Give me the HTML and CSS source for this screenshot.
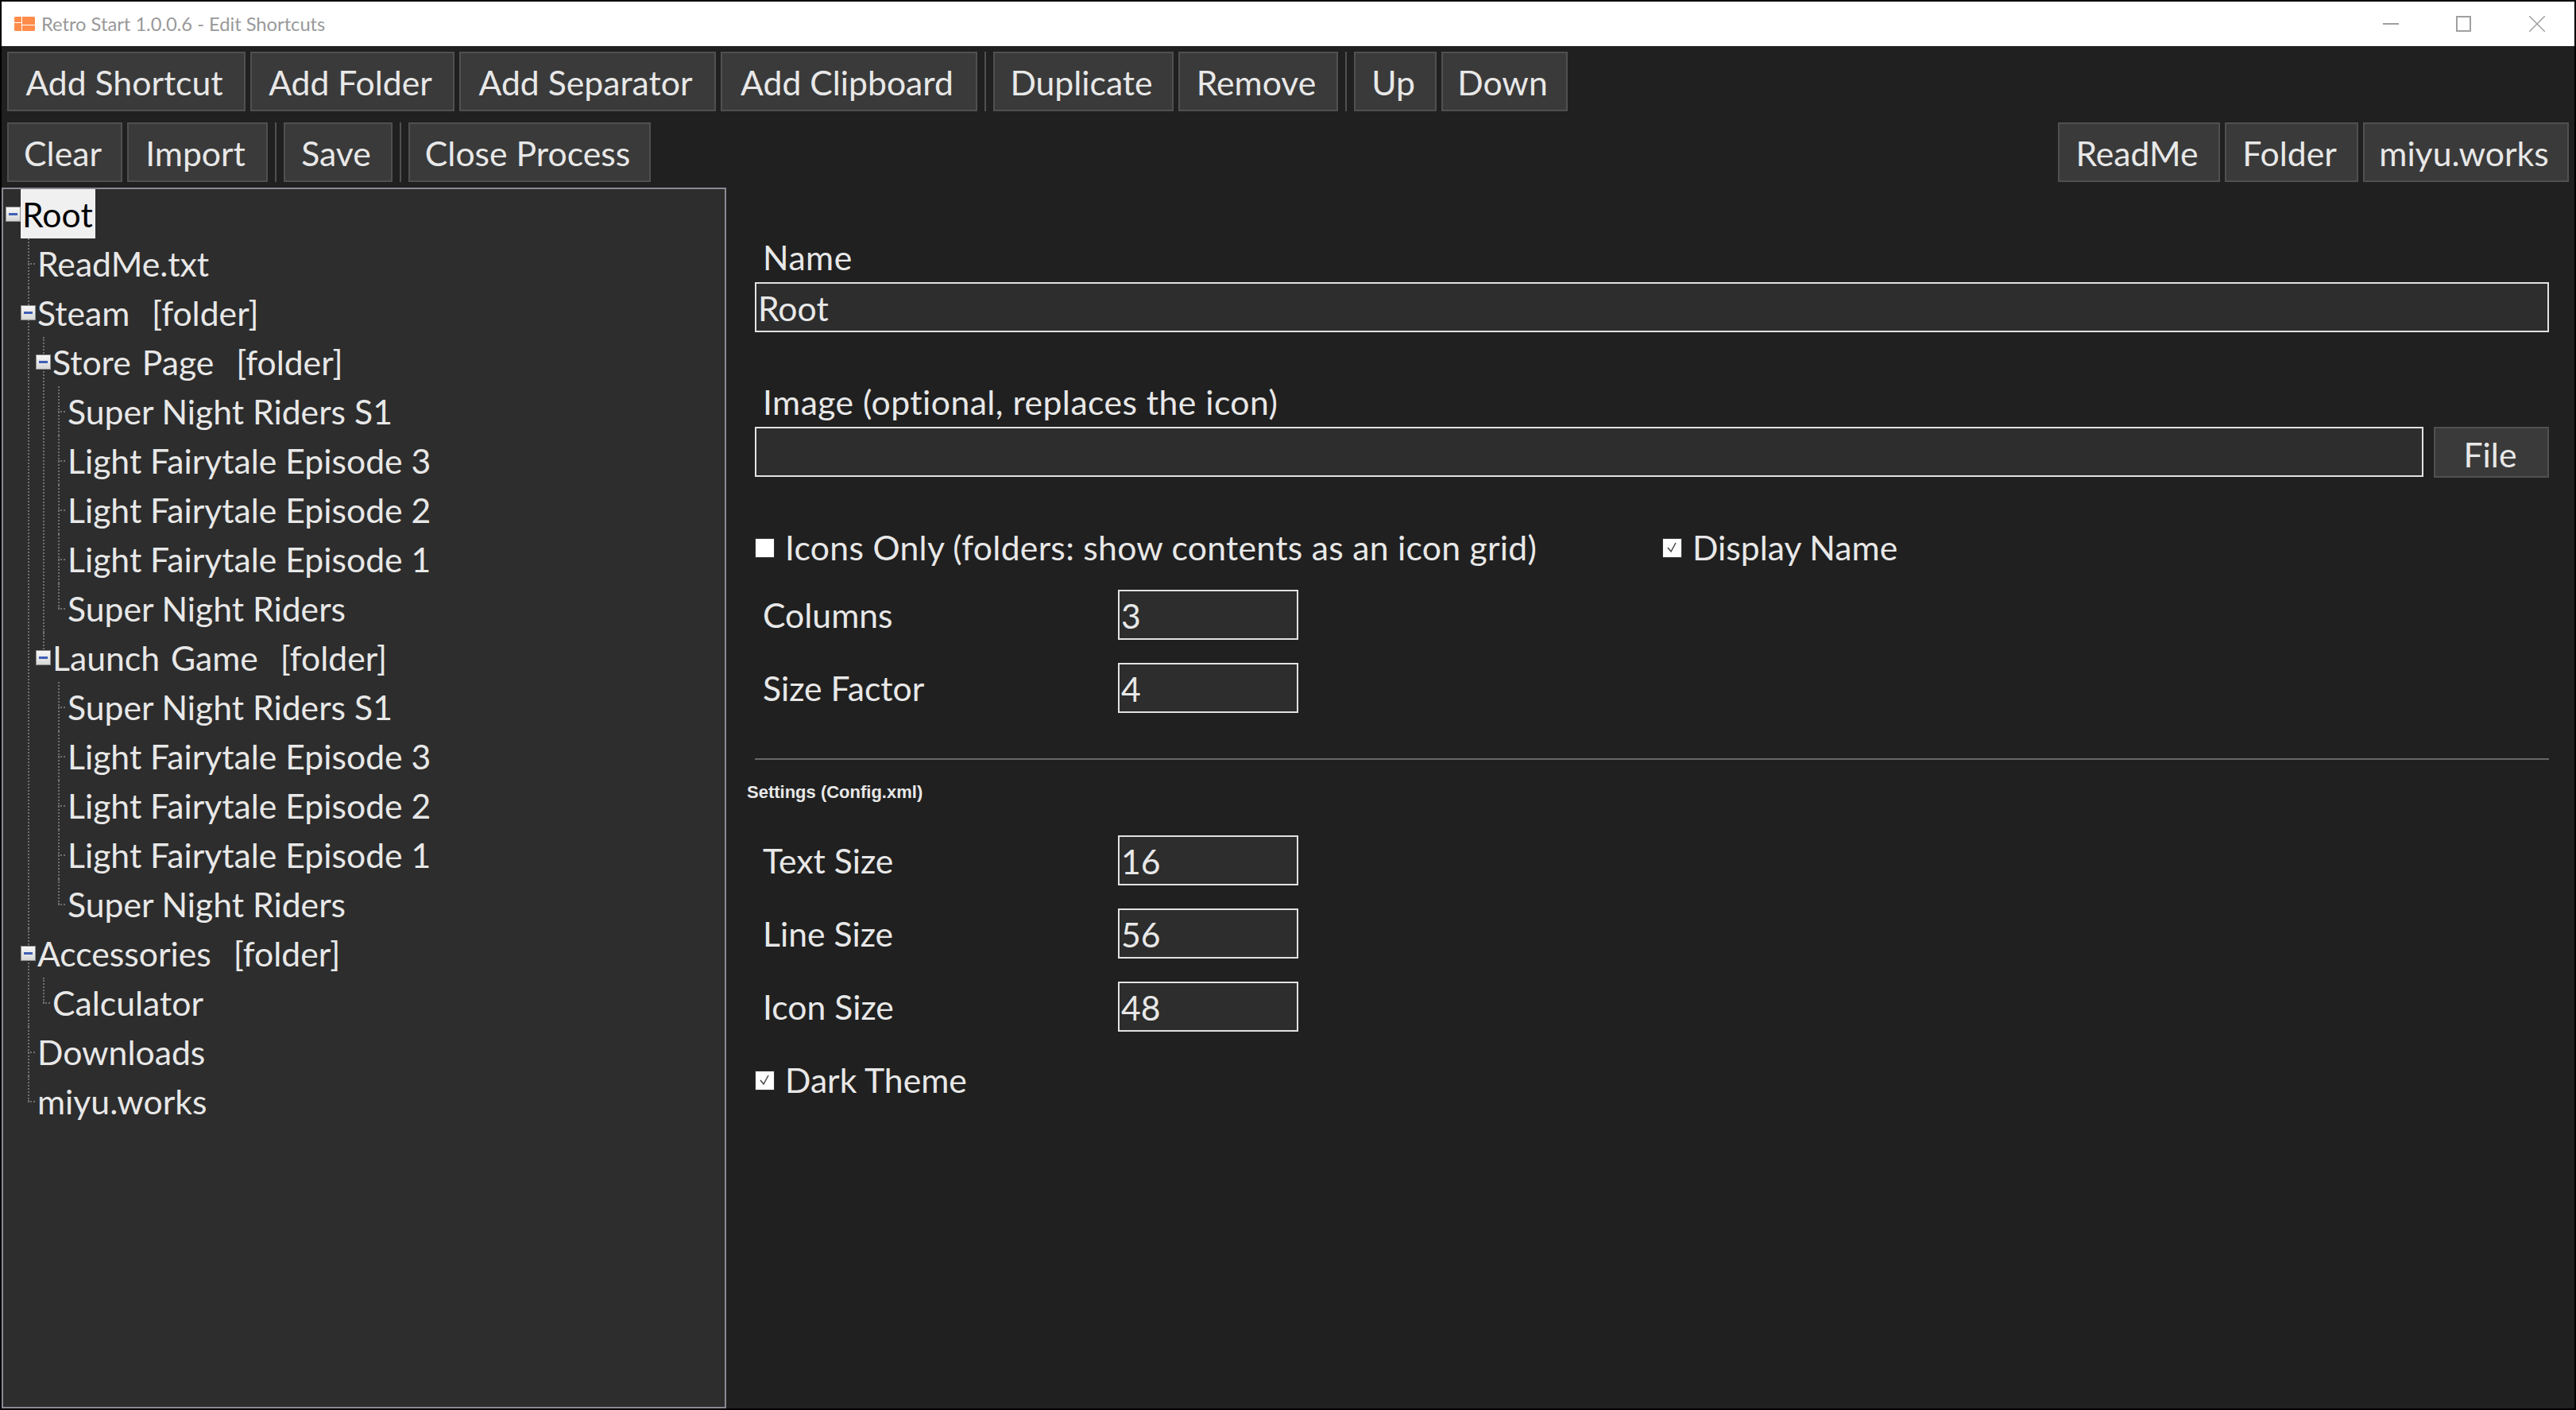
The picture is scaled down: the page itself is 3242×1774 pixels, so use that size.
FILE: index.html
```html
<!DOCTYPE html>
<html lang="en">
<head>
    <meta charset="UTF-8">
    <meta name="viewport" content="width=device-width, initial-scale=1.0">
    <title>Retro Start 1.0.0.6 - Edit Shortcuts</title>
    <link rel="stylesheet" href="styles.css">
</head>
<body>
    <div class="window">
        <div class="titlebar">
            <svg class="app-icon" width="26" height="18" viewBox="0 0 26 18">
                <path fill="#ff8c4b" d="M1.500 0H9v7H0V1.500A1.500 1.500 0 0 1 1.500 0zM10 0h14.500A1.500 1.500 0 0 1 26 1.500V10H10zM0 8h9v10H1.500A1.500 1.500 0 0 1 0 16.500zM10 11h16v5.500a1.500 1.500 0 0 1-1.500 1.500H10z"/>
            </svg>
            <span class="title-text">Retro Start 1.0.0.6 - Edit Shortcuts</span>
            <div class="window-controls">
                <svg width="20" height="20" viewBox="0 0 20 20"><path d="M0 10h20" stroke="#a0a0a0" stroke-width="2"/></svg>
                <svg width="20" height="20" viewBox="0 0 20 20"><path d="M1 1h17v18H1z" fill="none" stroke="#a0a0a0" stroke-width="2"/></svg>
                <svg width="20" height="20" viewBox="0 0 20 20"><path d="M0 0l20 20M20 0L0 20" stroke="#a0a0a0" stroke-width="1.500"/></svg>
            </div>
        </div>

        <div class="toolbar toolbar-first">
            <button class="btn">Add Shortcut</button>
            <button class="btn">Add Folder</button>
            <button class="btn">Add Separator</button>
            <button class="btn">Add Clipboard</button>
            <span class="tool-sep"></span>
            <button class="btn">Duplicate</button>
            <button class="btn">Remove</button>
            <span class="tool-sep"></span>
            <button class="btn">Up</button>
            <button class="btn">Down</button>
        </div>
        <div class="toolbar toolbar-second">
            <button class="btn">Clear</button>
            <button class="btn">Import</button>
            <span class="tool-sep"></span>
            <button class="btn">Save</button>
            <span class="tool-sep"></span>
            <button class="btn">Close Process</button>
            <span></span>
            <button class="btn">ReadMe</button>
            <button class="btn">Folder</button>
            <button class="btn">miyu.works</button>
        </div>

        <div class="content">
            <div class="tree-panel">
                <ul class="tree">
                    <li class="root">
                        <span class="expander"></span><span class="node selected">Root</span>
                        <ul>
                            <li><span class="node">ReadMe.txt</span></li>
                            <li>
                                <span class="expander"></span><span class="node folder">Steam&nbsp; [folder]</span>
                                <ul>
                                    <li>
                                        <span class="expander"></span><span class="node folder">Store Page&nbsp; [folder]</span>
                                        <ul>
                                            <li><span class="node">Super Night Riders S1</span></li>
                                            <li><span class="node">Light Fairytale Episode 3</span></li>
                                            <li><span class="node">Light Fairytale Episode 2</span></li>
                                            <li><span class="node">Light Fairytale Episode 1</span></li>
                                            <li><span class="node">Super Night Riders</span></li>
                                        </ul>
                                    </li>
                                    <li>
                                        <span class="expander"></span><span class="node folder">Launch Game&nbsp; [folder]</span>
                                        <ul>
                                            <li><span class="node">Super Night Riders S1</span></li>
                                            <li><span class="node">Light Fairytale Episode 3</span></li>
                                            <li><span class="node">Light Fairytale Episode 2</span></li>
                                            <li><span class="node">Light Fairytale Episode 1</span></li>
                                            <li><span class="node">Super Night Riders</span></li>
                                        </ul>
                                    </li>
                                </ul>
                            </li>
                            <li>
                                <span class="expander"></span><span class="node folder">Accessories&nbsp; [folder]</span>
                                <ul>
                                    <li><span class="node">Calculator</span></li>
                                </ul>
                            </li>
                            <li><span class="node">Downloads</span></li>
                            <li><span class="node">miyu.works</span></li>
                        </ul>
                    </li>
                </ul>
            </div>

            <div class="form">
                <label class="field-label">Name</label>
                <input class="text-input" type="text" value="Root">

                <label class="field-label field-label-gap">Image (optional, replaces the icon)</label>
                <div class="file-row">
                    <input class="text-input" type="text">
                    <button class="btn btn-file">File</button>
                </div>

                <div class="check-row">
                    <div class="check-item check-item-wide"><span class="check"></span>Icons Only (folders: show contents as an icon grid)</div>
                    <div class="check-item"><span class="check checked"><svg width="22" height="22" viewBox="0 0 22 22"><path d="M6 11l4 5 6-11" fill="none" stroke="#444" stroke-width="1.500"/></svg></span>Display Name</div>
                </div>

                <div class="num-row num-row-first"><label>Columns</label><input class="text-input num-input" type="text" value="3"></div>
                <div class="num-row"><label>Size Factor</label><input class="text-input num-input" type="text" value="4"></div>

                <hr class="divider">
                <div class="settings-title">Settings (Config.xml)</div>

                <div class="num-row num-row-settings"><label>Text Size</label><input class="text-input num-input" type="text" value="16"></div>
                <div class="num-row"><label>Line Size</label><input class="text-input num-input" type="text" value="56"></div>
                <div class="num-row"><label>Icon Size</label><input class="text-input num-input" type="text" value="48"></div>

                <div class="check-row check-row-last">
                    <div class="check-item"><span class="check checked"><svg width="22" height="22" viewBox="0 0 22 22"><path d="M6 11l4 5 6-11" fill="none" stroke="#444" stroke-width="1.500"/></svg></span>Dark Theme</div>
                </div>
            </div>
        </div>
    </div>
</body>
</html>
```

FILE: styles.css
```css
* {
    box-sizing: border-box;
}

html, body {
    height: 100%;
}

body {
    margin: 0;
    padding: 2px;
    background-color: #000;
    color: #e8e8e8;
    font-family: "Lato", "Open Sans", sans-serif;
    font-size: 42.7px;
}

.window {
    display: flex;
    flex-direction: column;
    height: 100%;
    background-color: #202020;
}

/* title bar */
.titlebar {
    display: flex;
    align-items: center;
    flex: none;
    height: 56px;
    padding-left: 16px;
    background-color: #fff;
}

.app-icon {
    margin-right: 8px;
}

.title-text {
    color: #999;
    font-size: 23.7px;
}

.window-controls {
    display: flex;
    gap: 72px;
    margin-left: auto;
    padding-right: 37px;
}

/* toolbars */
.toolbar {
    display: grid;
    flex: none;
    gap: 6px;
    padding: 7px 7px 0;
}

.toolbar-first {
    grid-template-columns: 300px 257px 323px 323px 8px 227px 201px 8px 104px 159px;
}

.toolbar-second {
    grid-template-columns: 145px 177px 8px 137px 8px 305px 1fr 204px 168px 259px;
    padding-top: 14px;
}

.btn {
    height: 75px;
    padding: 3px 5px 0 0;
    border: 2px solid #505050;
    background-color: #3a3a3a;
    color: #e8e8e8;
    font: inherit;
    line-height: 1;
    white-space: nowrap;
}

.tool-sep {
    justify-self: center;
    width: 2px;
    background-color: #505050;
}

/* shortcut tree */
.content {
    display: flex;
    flex: 1;
    min-height: 0;
    padding-top: 7px;
}

.tree-panel {
    flex: none;
    width: 912px;
    padding: 0 0 0 12px;
    border: 2px solid #8a8a94;
    background-color: #2d2d2d;
    overflow: hidden;
}

.tree,
.tree ul {
    margin: 0;
    padding: 0;
    list-style: none;
}

.tree ul {
    padding-left: 19px;
}

.tree li {
    position: relative;
}

.node {
    display: inline-block;
    height: 62px;
    margin-left: 10px;
    padding: 0 3px 0 2px;
    line-height: 64px;
    white-space: nowrap;
}

.folder {
    word-spacing: 3px;
}

.selected {
    background-color: #f0f0f0;
    color: #000;
}

.expander {
    position: absolute;
    left: -9px;
    top: 22px;
    z-index: 1;
    width: 19px;
    height: 19px;
    border: 1px solid #8e8f8f;
    background: linear-gradient(#f8f8f8, #d6d6d6);
}

.expander::after {
    content: "";
    position: absolute;
    left: 3px;
    top: 7px;
    width: 11px;
    height: 3px;
    background-color: #3f5fb5;
}

/* dotted tree lines */
.tree ul > li::before {
    content: "";
    position: absolute;
    left: 0;
    top: 0;
    bottom: 0;
    border-left: 2px dotted #707070;
}

.tree ul > li:last-child::before {
    bottom: auto;
    height: 32px;
}

.tree ul > li::after {
    content: "";
    position: absolute;
    left: 0;
    top: 31px;
    width: 9px;
    border-top: 2px dotted #707070;
}

/* right side form */
.form {
    flex: 1;
    min-width: 0;
    padding: 57px 32px 0 36px;
}

.field-label {
    display: block;
    height: 62px;
    padding-left: 10px;
    line-height: 62px;
    letter-spacing: 0.45px;
}

.field-label-gap {
    margin-top: 57px;
}

.text-input {
    display: block;
    width: 100%;
    height: 63px;
    padding: 2px 0 0 2px;
    border: 2px solid #e2e2e2;
    border-radius: 0;
    outline: none;
    background-color: #2d2d2d;
    color: #e8e8e8;
    font: inherit;
}

.file-row {
    display: flex;
    gap: 13px;
}

.file-row .text-input {
    flex: 1;
}

.btn-file {
    flex: none;
    width: 145px;
    height: 64px;
    padding: 6px 3px 0 0;
}

.check-row {
    display: flex;
    align-items: center;
    height: 62px;
    margin-top: 57px;
}

.check-item {
    display: flex;
    align-items: center;
    gap: 13px;
    line-height: 66px;
    white-space: nowrap;
}

.check-item-wide {
    width: 1142px;
    letter-spacing: 0.28px;
}

.check {
    flex: none;
    width: 25px;
    height: 25px;
    border: 1px solid #333;
    background-color: #fff;
}

.check svg {
    display: block;
}

.num-row {
    display: flex;
    align-items: center;
    margin-top: 29px;
}

.num-row label {
    width: 457px;
    padding-left: 10px;
}

.num-row .num-input {
    width: 227px;
}

.num-row-first {
    margin-top: 22px;
}

.num-row-settings {
    margin-top: 41px;
}

.divider {
    height: 2px;
    margin: 57px 0 0;
    border: 0;
    background-color: #666;
}

.settings-title {
    margin: 28px 0 0 -10px;
    font-family: "Liberation Sans", sans-serif;
    font-size: 22px;
    font-weight: bold;
    color: #e8e8e8;
}

.check-row-last {
    margin-top: 30px;
}
```
